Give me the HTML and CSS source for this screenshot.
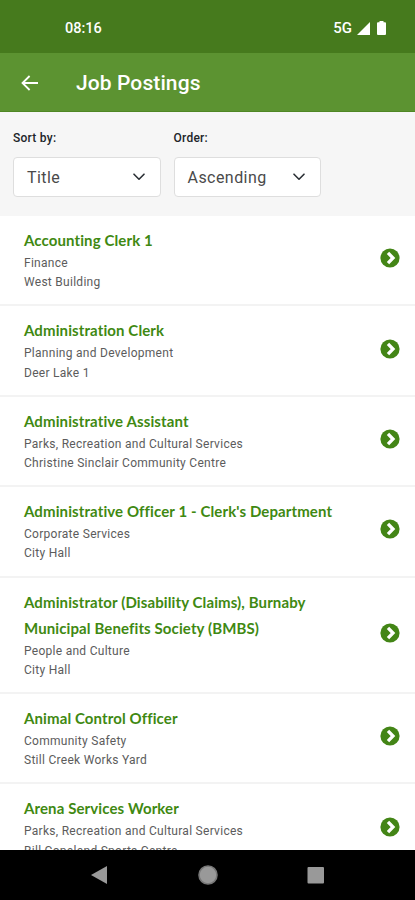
FILE: index.html
```html
<!DOCTYPE html>
<html lang="en">
<head>
    <meta charset="UTF-8">
    <meta name="viewport" content="width=device-width, initial-scale=1.0">
    <title>Job Postings</title>
    <link rel="stylesheet" href="styles.css">
</head>
<body>
    <svg width="0" height="0" class="sprite">
        <symbol id="chevron-circle" viewBox="0 0 20 20">
            <circle cx="10" cy="10" r="9.6" fill="#438516"/>
            <path d="M8 4.8L13 10l-5 5.2" fill="none" stroke="#fff" stroke-width="3.3"/>
        </symbol>
        <symbol id="caret" viewBox="0 0 12 8">
            <path d="M1 1.2l5 5 5-5" fill="none" stroke="#2b3035" stroke-width="1.6" stroke-linecap="round" stroke-linejoin="round"/>
        </symbol>
    </svg>

    <div class="status-bar">
        <span class="clock">08:16</span>
        <div class="status-icons">
            <span class="network">5G</span>
            <svg class="signal" width="13" height="13" viewBox="0 0 13 13"><path d="M13 0v13H0z" fill="#fff"/></svg>
            <svg class="battery" width="9" height="14" viewBox="0 0 9 14"><path d="M2.5 0h4v1.3H8q1 0 1 1V13q0 1-1 1H1q-1 0-1-1V2.3q0-1 1-1h1.5z" fill="#fff"/></svg>
        </div>
    </div>

    <header class="app-bar">
        <svg class="back" width="18" height="16" viewBox="0 0 18 16"><path d="M17 8H1.5M8.6 1L1.5 8l7.1 7" fill="none" stroke="#fff" stroke-width="1.8"/></svg>
        <h1>Job Postings</h1>
    </header>

    <div class="filters">
        <div class="field">
            <label id="sortLabel">Sort by:</label>
            <div class="select" role="button" aria-labelledby="sortLabel">
                <span>Title</span>
                <svg width="12" height="8"><use href="#caret"/></svg>
            </div>
        </div>
        <div class="field">
            <label id="orderLabel">Order:</label>
            <div class="select" role="button" aria-labelledby="orderLabel">
                <span>Ascending</span>
                <svg width="12" height="8"><use href="#caret"/></svg>
            </div>
        </div>
    </div>

    <main class="jobs">
        <div class="job">
            <div class="info">
                <h2>Accounting Clerk 1</h2>
                <p>Finance</p>
                <p>West Building</p>
            </div>
            <svg class="go"><use href="#chevron-circle"/></svg>
        </div>
        <div class="job">
            <div class="info">
                <h2>Administration Clerk</h2>
                <p>Planning and Development</p>
                <p>Deer Lake 1</p>
            </div>
            <svg class="go"><use href="#chevron-circle"/></svg>
        </div>
        <div class="job">
            <div class="info">
                <h2>Administrative Assistant</h2>
                <p>Parks, Recreation and Cultural Services</p>
                <p>Christine Sinclair Community Centre</p>
            </div>
            <svg class="go"><use href="#chevron-circle"/></svg>
        </div>
        <div class="job">
            <div class="info">
                <h2>Administrative Officer 1 - Clerk's Department</h2>
                <p>Corporate Services</p>
                <p>City Hall</p>
            </div>
            <svg class="go"><use href="#chevron-circle"/></svg>
        </div>
        <div class="job">
            <div class="info">
                <h2>Administrator (Disability Claims), Burnaby Municipal Benefits Society (BMBS)</h2>
                <p>People and Culture</p>
                <p>City Hall</p>
            </div>
            <svg class="go"><use href="#chevron-circle"/></svg>
        </div>
        <div class="job">
            <div class="info">
                <h2>Animal Control Officer</h2>
                <p>Community Safety</p>
                <p>Still Creek Works Yard</p>
            </div>
            <svg class="go"><use href="#chevron-circle"/></svg>
        </div>
        <div class="job">
            <div class="info">
                <h2>Arena Services Worker</h2>
                <p>Parks, Recreation and Cultural Services</p>
                <p>Bill Copeland Sports Centre</p>
            </div>
            <svg class="go"><use href="#chevron-circle"/></svg>
        </div>
    </main>

    <nav class="system-nav">
        <svg width="236" height="22" viewBox="0 0 236 22">
            <path d="M1 11L17 2v18z" fill="#999"/>
            <circle cx="118" cy="11" r="9" fill="#999" stroke="#777" stroke-width="1.6"/>
            <rect x="217.5" y="3" width="16.5" height="16.5" rx="1" fill="#999"/>
        </svg>
    </nav>
</body>
</html>
```
FILE: styles.css
```css
* {
    box-sizing: border-box;
}
body {
    margin: 0;
    height: 900px;
    display: flex;
    flex-direction: column;
    overflow: hidden;
    background-color: #fff;
    font-family: Roboto, "Liberation Sans", sans-serif;
}
h1, h2, p {
    margin: 0;
}
.sprite {
    display: none;
}
.status-bar {
    flex: none;
    height: 53px;
    padding: 3px 29px 0 65px;
    display: flex;
    align-items: center;
    justify-content: space-between;
    background-color: #467a1d;
    color: #fff;
}
.clock {
    font-size: 14.5px;
    font-weight: 500;
}
.status-icons {
    display: flex;
    align-items: center;
}
.network {
    font-size: 15px;
    font-weight: 500;
}
.signal {
    margin-left: 5px;
}
.battery {
    margin-left: 7px;
}
.app-bar {
    flex: none;
    height: 59px;
    padding: 2px 22px 0 21px;
    display: flex;
    align-items: center;
    gap: 37px;
    background-color: #5c9331;
    border-bottom: 1px solid #4f8724;
    color: #fff;
}
.app-bar h1 {
    font-size: 21px;
    font-weight: 500;
    letter-spacing: 0.1px;
}
.filters {
    flex: none;
    height: 104px;
    padding: 17px 13px 0;
    display: flex;
    gap: 13px;
    background-color: #f6f6f6;
}
.field {
    width: 147.5px;
}
.field label {
    display: block;
    margin-bottom: 10px;
    font-size: 12px;
    font-weight: 500;
    line-height: 18px;
    letter-spacing: 0.25px;
    color: #212529;
}
.select {
    height: 40px;
    padding: 0 15px 0 13px;
    display: flex;
    align-items: center;
    justify-content: space-between;
    background-color: #fff;
    border: 1px solid #dedede;
    border-radius: 4px;
    font-size: 16px;
    letter-spacing: 0.45px;
    color: #4a4a4a;
}
.jobs {
    flex: 1;
    min-height: 0;
    overflow: hidden;
}
.job {
    padding: 11px 15px 12px 24px;
    display: flex;
    align-items: center;
    justify-content: space-between;
    border-bottom: 2px solid #f3f3f3;
}
.info {
    width: 320px;
}
.job h2 {
    margin-bottom: 1px;
    font-family: Lato, "Open Sans", sans-serif;
    font-size: 15px;
    font-weight: 700;
    line-height: 26px;
    letter-spacing: 0.11px;
    color: #3f8912;
}
.job p {
    font-size: 12px;
    line-height: 19.2px;
    letter-spacing: 0.28px;
    color: #5c5c5c;
}
.go {
    width: 20px;
    height: 20px;
    margin-bottom: 3px;
}
.system-nav {
    flex: none;
    height: 50px;
    display: flex;
    align-items: center;
    justify-content: center;
    background-color: #000;
}
```
